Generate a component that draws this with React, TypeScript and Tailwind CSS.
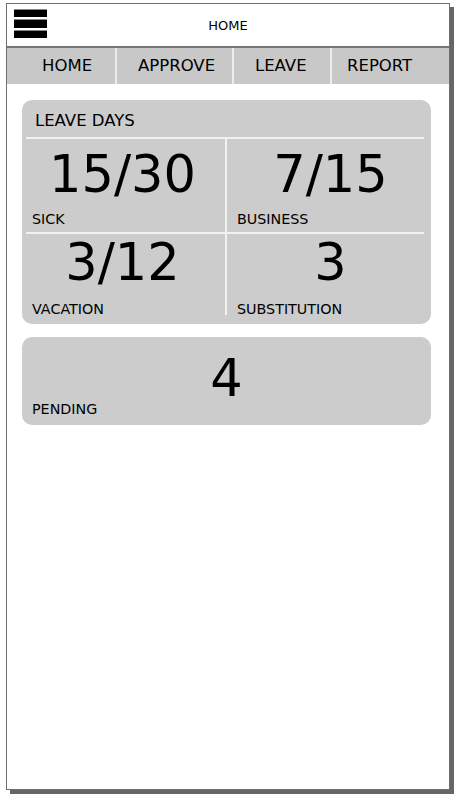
const tabs = [
  { label: "HOME", w: "w-[110px]", pl: "pl-[35px]" },
  { label: "APPROVE", w: "w-[117px]", pl: "pl-[21px]" },
  { label: "LEAVE", w: "w-[98px]", pl: "pl-[21px]" },
  { label: "REPORT", w: "flex-1", pl: "pl-[15px]" },
];

function Stat({ value, label, top, gap, pl }: { value: string; label: string; top: string; gap: string; pl: string }) {
  return (
    <div className={`flex flex-col ${top} ${pl}`}>
      <div className="h-[50px] text-center text-[51px] leading-[50px]">{value}</div>
      <div className={`${gap} text-[14.3px] leading-[14px]`}>{label}</div>
    </div>
  );
}

export default function App() {
  return (
    <div
      className="w-[456px] h-[798px] bg-white pt-[3px] pl-[6px] text-black"
      style={{ fontFamily: '"DejaVu Sans", Verdana, sans-serif' }}
    >
      <div className="w-[444px] h-[787px] border border-[#6e6e6e] shadow-[4px_4px_0_#666] flex flex-col bg-white">
        {/* header */}
        <div className="relative h-[44px] border-b-2 border-[#767676] flex items-center justify-center pt-[2px]">
          <div className="absolute left-[7px] top-[5px] flex flex-col gap-[2px]">
            <div className="w-[33px] h-[8px] bg-black border-t border-[#888]" />
            <div className="w-[33px] h-[9px] bg-black border-t border-[#888]" />
            <div className="w-[33px] h-[8px] bg-black border-t border-[#888]" />
          </div>
          <span className="text-[13px]">HOME</span>
        </div>

        {/* tabs */}
        <div className="h-[36px] flex bg-[#c8c8c8]">
          {tabs.map((t, i) => (
            <div key={t.label} className={`flex ${t.w} ${i < tabs.length - 1 ? "border-r-2 border-[#ececec]" : ""}`}>
              <div className={`flex items-center text-[16.5px] ${t.pl}`}>{t.label}</div>
            </div>
          ))}
        </div>

        <div className="pl-[15px] pr-[18px] pt-[16px] flex flex-col gap-[13px]">
          {/* leave days */}
          <div className="bg-[#cccccc] rounded-[10px] pl-[4px] pr-[7px] pb-[9px]">
            <div className="h-[37px] flex items-center pl-[9px] pt-[5px] text-[16.5px]">LEAVE DAYS</div>
            <div className="h-[2px] bg-[#f2f2f2]" />
            <div className="grid grid-cols-[199px_2px_197px]">
              <div className="h-[93px]">
                <Stat value="15/30" label="SICK" top="pt-[11px]" gap="mt-[12px]" pl="pl-[6px] pr-[12px]" />
              </div>
              <div className="bg-[#f2f2f2]" />
              <div className="h-[93px]">
                <Stat value="7/15" label="BUSINESS" top="pt-[11px]" gap="mt-[12px]" pl="pl-[10px]" />
              </div>
              <div className="col-span-3 h-[2px] bg-[#f2f2f2]" />
              <div className="h-[81px]">
                <Stat value="3/12" label="VACATION" top="pt-[4px]" gap="mt-[14px]" pl="pl-[6px] pr-[12px]" />
              </div>
              <div className="bg-[#f2f2f2]" />
              <div className="h-[81px]">
                <Stat value="3" label="SUBSTITUTION" top="pt-[4px]" gap="mt-[14px]" pl="pl-[10px]" />
              </div>
            </div>
          </div>

          {/* pending */}
          <div className="bg-[#cccccc] rounded-[10px] h-[88px] flex flex-col pl-[10px] pt-[17px]">
            <div className="h-[50px] text-center text-[51px] leading-[50px] pr-[10px]">4</div>
            <div className="mt-[-2px] text-[14.3px] leading-[14px]">PENDING</div>
          </div>
        </div>
      </div>
    </div>
  );
}
